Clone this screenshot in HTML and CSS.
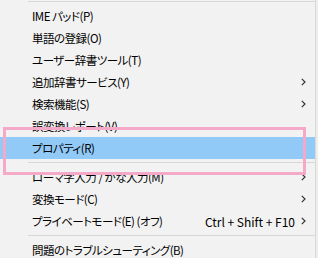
FILE: index.html
```html
<!DOCTYPE html>
<html lang="ja">

<head>
    <meta charset="UTF-8">
    <meta name="viewport" content="width=device-width, initial-scale=1.0">
    <title>IME メニュー</title>
    <link rel="stylesheet" href="styles.css">
</head>

<body>
    <div class="menu">
        <div class="sep top"></div>
        <div class="item"><span class="label">IME パッド(P)</span></div>
        <div class="item"><span class="label">単語の登録(O)</span></div>
        <div class="item"><span class="label">ユーザー辞書ツール(T)</span></div>
        <div class="item">
            <span class="label">追加辞書サービス(Y)</span>
            <svg class="arrow" width="5" height="8" viewBox="0 0 5 8"><polyline points="0.8,0.8 4,4 0.8,7.2" /></svg>
        </div>
        <div class="item">
            <span class="label">検索機能(S)</span>
            <svg class="arrow" width="5" height="8" viewBox="0 0 5 8"><polyline points="0.8,0.8 4,4 0.8,7.2" /></svg>
        </div>
        <div class="item"><span class="label">誤変換レポート(V)</span></div>
        <div class="item active"><span class="label">プロパティ(R)</span></div>
        <div class="sep"></div>
        <div class="item">
            <span class="label">ローマ字入力 / かな入力(M)</span>
            <svg class="arrow" width="5" height="8" viewBox="0 0 5 8"><polyline points="0.8,0.8 4,4 0.8,7.2" /></svg>
        </div>
        <div class="item">
            <span class="label">変換モード(C)</span>
            <svg class="arrow" width="5" height="8" viewBox="0 0 5 8"><polyline points="0.8,0.8 4,4 0.8,7.2" /></svg>
        </div>
        <div class="item">
            <span class="label">プライベートモード(E) (オフ)</span>
            <span class="shortcut">Ctrl + Shift + F10</span>
            <svg class="arrow" width="5" height="8" viewBox="0 0 5 8"><polyline points="0.8,0.8 4,4 0.8,7.2" /></svg>
        </div>
        <div class="sep"></div>
        <div class="item"><span class="label">問題のトラブルシューティング(B)</span></div>

        <!-- annotation frame drawn over the screenshot -->
        <div class="mark"></div>
    </div>
</body>

</html>
```

FILE: styles.css
```css
body {
    margin: 0;
    padding: 0;
    background-color: #ededed;
    font-family: "Noto Sans CJK JP", sans-serif;
    font-size: 12px;
    color: #000;
    overflow: hidden;
}

.menu {
    position: relative;
    width: 315px;
    height: 262px;
    margin-top: -2px;
    background-color: #f2f2f2;
    border-right: 1px solid #d9d9d9;
}

.item {
    display: flex;
    align-items: center;
    height: 22px;
    padding: 0 9px 0 32px;
    white-space: nowrap;
}

.item.active {
    background-color: #91c9f7;
}

.label {
    line-height: 22px;
    font-size: 11.5px;
    letter-spacing: -0.5px;
    font-feature-settings: "palt";
}

.shortcut {
    margin-left: auto;
}

.arrow {
    margin-left: auto;
    fill: none;
    stroke: #333;
    stroke-width: 1.2;
}

.shortcut + .arrow {
    margin-left: 6px;
}

.sep {
    height: 7px;
    margin-left: 28px;
    box-sizing: border-box;
    border-top: 3px solid #f2f2f2;
    border-bottom: 3px solid #f2f2f2;
    background-color: #d7d7d7;
}

.mark {
    position: absolute;
    left: 3px;
    top: 129px;
    width: 297px;
    height: 42px;
    border: 3px solid #f5a9c8;
}
```
